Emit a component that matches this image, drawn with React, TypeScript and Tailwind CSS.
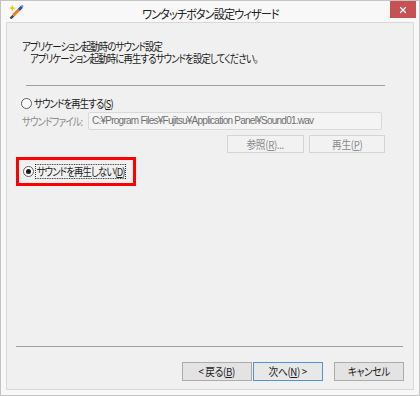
import { X } from 'lucide-react'

const JP = "font-['Noto_Sans_CJK_JP','Noto_Sans',sans-serif] [font-feature-settings:'palt']"

// Noto's kana are wider than the dialog's UI font, so squeeze the text a bit
function Narrow({ children, className }: { children: React.ReactNode; className?: string }) {
  return (
    <span className={'inline-block origin-left scale-x-[0.85] whitespace-nowrap ' + (className ?? '')}>
      {children}
    </span>
  )
}

function Radio({ checked }: { checked?: boolean }) {
  return (
    <span className="flex h-[11px] w-[11px] shrink-0 items-center justify-center rounded-full border border-[#5f5f5f] bg-white">
      {checked && <span className="h-[5px] w-[5px] rounded-full bg-[#1a1a1a]" />}
    </span>
  )
}

function WinButton({
  children,
  disabled,
  focused,
  className,
}: {
  children: React.ReactNode
  disabled?: boolean
  focused?: boolean
  className?: string
}) {
  return (
    <div
      className={
        'flex items-center justify-center text-[11px] leading-none tracking-[-0.4px] ' +
        (disabled
          ? 'border border-[#d5d5d5] bg-[#f2f2f2] text-[#8a8a8a] '
          : focused
            ? 'border border-[#4a95dc] bg-[#e8e8e8] text-[#1a1a1a] '
            : 'border border-[#acacac] bg-[#e3e3e3] text-[#1a1a1a] ') +
        (className ?? '')
      }
    >
      <span className="inline-block origin-center scale-x-[0.88] whitespace-pre">{children}</span>
    </div>
  )
}

function WizardIcon() {
  return (
    <svg width="16" height="15" viewBox="0 0 15 14">
      <path d="M1.5 12.8 L4.3 10 L5.9 11.6 L3.1 14.4 Z" fill="#4a4a4a" />
      <path d="M4 9.6 L9 4.6 L11 6.6 L6 11.6 Z" fill="#ef7a22" />
      <path d="M9 4.6 L12 1.6 L14 3.6 L11 6.6 Z" fill="#2452b0" />
      <path d="M12 1.6 L13.2 0.5 L14.6 1.9 L14 3.6 Z" fill="#7b9be0" />
      <path d="M4 0.5 L4.8 3 L7.3 3.8 L4.8 4.6 L4 7.1 L3.2 4.6 L0.7 3.8 L3.2 3 Z" fill="#f5c400" />
    </svg>
  )
}

export default function App() {
  return (
    <div className={`h-[396px] w-[420px] bg-white ${JP}`}>
      <div className="flex h-full flex-col border border-[#c4c4c4] bg-[#f8f8f8]">
        {/* title bar */}
        <div className="relative flex h-[21px] shrink-0 items-center justify-center">
          <div className="absolute left-[7px] top-[3px]">
            <WizardIcon />
          </div>
          <span className="inline-block origin-center scale-x-[0.93] whitespace-nowrap pt-[4px] text-[12px] tracking-[-1px] text-[#222]">
            ワンタッチボタン設定ウィザード
          </span>
          <div className="absolute right-[3px] top-0 flex h-[17px] w-[26px] items-center justify-center bg-[#c75050]">
            <X className="h-[10px] w-[10px] text-white" strokeWidth={3} />
          </div>
        </div>

        {/* client area */}
        <div className="mx-[5px] mb-[5px] flex flex-1 flex-col border border-[#d9d9d9] bg-[#f0f0f0] text-[11px] leading-[12px] tracking-[-1px] text-[#1a1a1a]">
          <div className="flex flex-col pl-[15px] pt-[17px]">
            <div>
              <Narrow>アプリケーション起動時のサウンド設定</Narrow>
            </div>
            <div className="pl-[8px]">
              <Narrow>アプリケーション起動時に再生するサウンドを設定してください。</Narrow>
            </div>
          </div>

          <div className="ml-[19px] mr-[28px] mt-[21px] h-[1px] bg-[#a0a0a0]" />

          <div className="ml-[14px] mt-[9px] flex h-[16px] items-center gap-[2px]">
            <Radio />
            <Narrow>
              サウンドを再生する(<span className="underline">S</span>)
            </Narrow>
          </div>

          <div className="ml-[15px] mr-[31px] mt-[1px] flex h-[18px] items-center">
            <span className="w-[66px] shrink-0 text-[#8a8a8a]">
              <Narrow>サウンドファイル:</Narrow>
            </span>
            <div className="flex h-full flex-1 items-center rounded-[2px] border border-[#d9d9d9] bg-[#f4f4f4] pl-[3px] font-['Liberation_Sans','Noto_Sans_CJK_JP',sans-serif] text-[10px] tracking-[-0.75px] text-[#707070]">
              C:¥Program Files¥Fujitsu¥Application Panel¥Sound01.wav
            </div>
          </div>

          <div className="mr-[28px] mt-[5px] flex justify-end gap-[5px]">
            <WinButton disabled className="h-[18px] w-[77px]">
              参照(<span className="underline">R</span>)...
            </WinButton>
            <WinButton disabled className="h-[18px] w-[76px]">
              再生(<span className="underline">P</span>)
            </WinButton>
          </div>

          <div className="ml-[9px] mt-[4px] flex h-[29px] w-[120px] items-center border-[3px] border-[#ff0000] pl-[4px]">
            <Radio checked />
            <Narrow className="ml-[1px] border border-dotted border-[#1a1a1a] px-[1px] leading-[13px]">
              サウンドを再生しない(<span className="underline">D</span>)
            </Narrow>
          </div>

          <div className="mt-auto">
            <div className="ml-[9px] mr-[10px] h-[1px] bg-[#a0a0a0]" />
            <div className="mr-[9px] mt-[15px] mb-[8px] flex justify-end">
              <WinButton className="h-[19px] w-[70px]">
                &lt;&nbsp;戻る(<span className="underline">B</span>)
              </WinButton>
              <WinButton focused className="ml-[1px] h-[19px] w-[70px]">
                次へ(<span className="underline">N</span>)&nbsp;&gt;
              </WinButton>
              <WinButton className="ml-[11px] h-[19px] w-[70px]">キャンセル</WinButton>
            </div>
          </div>
        </div>
      </div>
    </div>
  )
}
